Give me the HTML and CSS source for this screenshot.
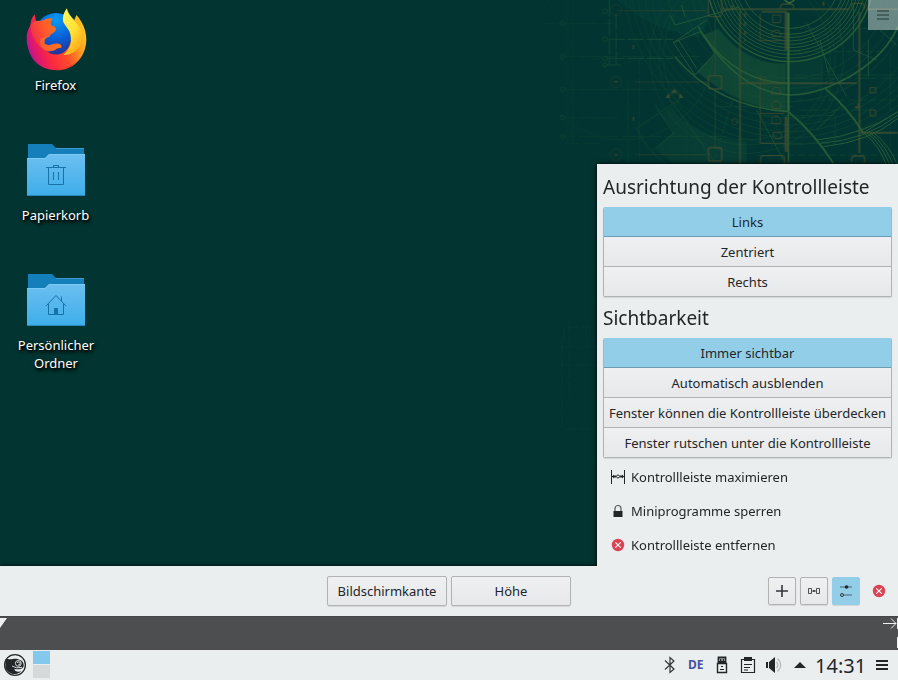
FILE: index.html
```html
<!DOCTYPE html>
<html lang="de">
<head>
<meta charset="utf-8">
<title>Desktop</title>
<link rel="stylesheet" href="styles.css">
</head>
<body>
<main class="desktop">
  <svg class="wallpaper" viewBox="0 0 1074 510" fill="none">
    <defs>
      <linearGradient id="fade" x1="0" x2="1"><stop offset="0" stop-color="#fff" stop-opacity=".25"/><stop offset=".45" stop-color="#fff" stop-opacity=".8"/><stop offset="1" stop-color="#fff" stop-opacity=".92"/></linearGradient>
      <mask id="fadeMask" maskUnits="userSpaceOnUse" x="0" y="0" width="1074" height="510"><rect width="1074" height="510" fill="url(#fade)"/></mask>
    </defs>
    <g mask="url(#fadeMask)">
      <path d="M230 0Q330 90 480 112L510 50 500 0Z" fill="#0b4a40" opacity=".4"/>
      <path d="M535 85Q620 195 738 190V335Q590 320 470 215L525 160 490 105Z" fill="#174f36" opacity=".8"/>
      <path d="M345 445L400 395 360 345 395 320Q450 410 620 425V490H400Z" fill="#10493a" opacity=".5"/>
      <path d="M745 190Q800 190 850 165V265Q800 285 745 285Z" fill="#10493a" opacity=".4"/>
      <g stroke="#33683b" stroke-width="3" opacity=".85">
        <circle cx="750" cy="-65" r="250" stroke-width="5"/><circle cx="750" cy="-65" r="239"/><circle cx="750" cy="-65" r="228"/><circle cx="750" cy="-65" r="218"/><circle cx="750" cy="-65" r="208"/><circle cx="750" cy="-65" r="198"/><circle cx="750" cy="-65" r="188"/><circle cx="750" cy="-65" r="178"/><circle cx="750" cy="-65" r="168"/><circle cx="750" cy="-65" r="150"/>
        <path d="M475 80Q590 275 745 285Q800 286 855 265Q1020 200 1074 80" stroke-width="5"/>
        <path d="M490 105Q590 245 740 250M405 170Q530 320 745 335" stroke-width="5"/>
        <path d="M745 335Q820 395 880 490M855 265Q920 320 970 398" stroke-width="6"/>
        <path d="M970 398L1074 335M970 398Q1020 435 1045 510M980 398Q1030 435 1055 510M990 398Q1040 435 1065 510M1000 398Q1050 435 1074 500"/>
        <path d="M400 128L500 60M400 128L465 225 525 160 480 95ZM415 120L470 205M390 45L405 75 600 20M425 15L435 50M840 430Q980 420 1074 345M850 440Q990 425 1074 355M830 420Q970 405 1074 335"/>
        <path d="M800 70L920 290M650 330L730 480M830 390L905 315M940 10V150L1010 180M985 120V230M1020 90L1070 135M840 120L865 220" stroke-width="2"/>
        <path d="M290 385L400 310 520 480M290 385Q310 440 375 490M345 315L400 400 340 450" opacity=".6"/>
      </g>
      <g stroke="#245c3b" stroke-width="2.500" opacity=".45">
        <circle cx="750" cy="-65" r="300"/><circle cx="750" cy="-65" r="330"/><circle cx="750" cy="-65" r="370"/><circle cx="750" cy="-65" r="420"/><circle cx="750" cy="-65" r="440"/><circle cx="750" cy="-65" r="460"/><circle cx="750" cy="-65" r="478"/><circle cx="750" cy="-65" r="500"/><circle cx="620" cy="170" r="250"/><circle cx="620" cy="170" r="265"/><circle cx="620" cy="170" r="290"/><circle cx="250" cy="150" r="270"/>
        <path d="M80 0V430M98 0V430M0 70H220M60 170H480M60 268H390M60 353H240M60 410H560M75 430H180M265 240V510M298 180V510M620 160L520 490M530 320H760M670 347H885V430H670M710 347V400M870 200V300M760 225H1074M760 235H1074M900 0V130M1050 160V440" stroke-dasharray="44 10 70 6"/>
        <path d="M750 85H1000M760 155H1020M770 300H1074M780 330H990M650 465H1074" stroke-dasharray="22 9"/>
      </g>
      <g stroke="#2a643b" stroke-width="3" opacity=".75">
        <path d="M208 0V195M228 40V195M195 195H245M205 118H400M205 175H400" stroke-dasharray="50 7"/>
        <circle cx="195" cy="34" r="7"/><circle cx="195" cy="118" r="7"/><circle cx="195" cy="175" r="7"/><circle cx="195" cy="195" r="6"/><circle cx="68" cy="70" r="7"/><circle cx="68" cy="170" r="7"/><circle cx="68" cy="268" r="7"/><circle cx="68" cy="353" r="7"/><circle cx="68" cy="410" r="7"/>
      </g>
      <g stroke="#5c5430" stroke-width="4" opacity=".7">
        <path d="M545 28H930M665 35H740M980 28H1074M600 32V510M600 250H950M958 35V460M960 398H1074" stroke="#4e5732" stroke-width="6"/>
        <path d="M230 32H500M525 50V225M525 270V440M285 246H500M285 464H500M970 30L985 10" stroke-width="3" opacity=".7"/>
        <path d="M505 0V40Q505 50 515 50H535Q545 50 545 40V0M722 28V18Q722 12 730 12H752Q760 12 760 20V28M935 25V15Q935 10 943 10H965Q972 10 972 18V28M662 510V475Q662 467 670 467H725Q733 467 733 475V510M935 485V477Q935 468 944 468H966Q974 468 974 477V490"/>
        <rect x="505" y="227" width="40" height="40" rx="7"/><rect x="505" y="443" width="40" height="40" rx="7" stroke-width="5"/>
        <path d="M738 35V150M738 350V455" stroke-width="9"/><path d="M660 40V122H735M660 225V430H735M660 340H735" stroke-width="3"/>
        <path d="M695 110V100A14 14 0 0 1 722 100V110ZM695 282V275A13 13 0 0 1 722 275V282ZM695 325V317A13 13 0 0 1 722 317V325ZM695 370V362A13 13 0 0 1 722 362V370ZM700 397H724V415H700ZM698 45H722V68H698ZM990 263H1007V279H990ZM990 330H1007V348H990Z" stroke-width="3"/>
        <circle cx="228" cy="30" r="17" stroke-width="2"/><circle cx="228" cy="246" r="17" stroke-width="2"/><circle cx="228" cy="464" r="17" stroke-width="2"/><circle cx="403" cy="294" r="15" stroke-width="2"/><circle cx="584" cy="365" r="9" stroke-width="2"/><circle cx="672" cy="238" r="8" stroke-width="2"/>
        <path d="M222 246H234M222 464H234M615 40V125M280 135V150M280 350V365M577 15V30M850 5V25M955 310V335M945 322H970" stroke-width="6" stroke-dasharray="12 14"/>
        <path d="M403 266L414 278H392ZM388 278L376 294H388ZM418 278L430 294H418Z" fill="#74652b" stroke="none"/>
      </g>
      <path d="M745 38V335" stroke="#3c713c" stroke-width="7"/>
      <path d="M745 335V490" stroke="#3c6337" stroke-width="4"/>
      <path d="M733 0L748 10 763 0" stroke="#50783c" stroke-width="4"/>
    </g>
  </svg>
  <svg class="wallpaper-lower" viewBox="0 0 50 130" fill="none" stroke="#063b36">
    <path d="M2 20V108H38M2 26H38M9 0V80M4 18V6H38M26 8V24M0 44H38" stroke-dasharray="12 3"/>
  </svg>

  <nav class="icons">
    <div class="shortcut">
      <svg class="firefox" viewBox="78 24 182 188">
        <defs>
          <radialGradient id="globe" cx=".5" cy=".15" r=".95"><stop offset="0" stop-color="#0a9cf4"/><stop offset=".45" stop-color="#0860d8"/><stop offset="1" stop-color="#2d217c"/></radialGradient>
          <linearGradient id="body" x1="1" y1=".25" x2="0" y2=".6"><stop offset="0" stop-color="#ffcf25"/><stop offset=".22" stop-color="#ff9a20"/><stop offset=".45" stop-color="#ff4b2b"/><stop offset=".7" stop-color="#fb2a40"/><stop offset=".88" stop-color="#e0186c"/><stop offset="1" stop-color="#b3159a"/></linearGradient>
          <linearGradient id="face" x1="1" y1=".2" x2="0" y2=".6"><stop offset="0" stop-color="#ff8018"/><stop offset=".5" stop-color="#ff5a2a"/><stop offset="1" stop-color="#f02a4c"/></linearGradient>
          <linearGradient id="flame" x1=".2" y1="0" x2=".8" y2="1"><stop offset="0" stop-color="#fff65a"/><stop offset=".5" stop-color="#ffe234"/><stop offset="1" stop-color="#ff9c18"/></linearGradient>
        </defs>
        <circle cx="168" cy="104" r="65" fill="url(#globe)"/>
        <path d="M104 43C94 54 92 65 91 76C80 93 78 112 82 134C90 184 126 210 169 210C217 210 256 174 258 120C258 88 245 65 229 45C219 62 221 70 217 80C220 135 197 163 169 163C142 163 128 143 126 117C133 96 114 91 108 64Z" fill="url(#body)"/>
        <path d="M91 76C99 62 112 60 121 63C132 59 143 53 157 55C152 64 150 70 154 77C164 78 170 84 166 92C159 101 147 103 149 111C139 110 131 116 133 131C149 141 157 128 171 130C183 131 186 137 183 143C168 141 166 155 144 153C128 151 119 138 112 130C99 114 94 99 91 76Z" fill="url(#face)"/>
        <path d="M119 121C123 108 137 107 148 111C137 111 133 119 134 130C150 141 157 128 172 131C183 133 185 137 182 143C169 140 165 157 142 152C128 148 119 136 119 121Z" fill="#ff7a22" opacity=".5"/>
        <path d="M200 25C203 44 222 59 234 76C255 104 246 137 222 154C211 162 199 165 190 164C211 148 218 119 207 93C198 75 187 71 188 55C188 43 194 34 200 25Z" fill="url(#flame)"/>
        <path d="M211 94C231 125 211 155 190 164C226 162 246 141 245 112C238 129 228 139 218 142C224 123 219 107 211 94Z" fill="#ffb91b" opacity=".65"/>
        <path d="M246 160Q225 199 190 202Q218 207 246 160Z" fill="#ef3724"/>
      </svg>
      <span class="short">Firefox</span>
    </div>
    <div class="shortcut">
      <svg class="folder" viewBox="0 0 58 54" fill="none">
        <defs><linearGradient id="sheet" x1="0" y1="0" x2="0" y2="1"><stop stop-color="#6cbff0"/><stop offset="1" stop-color="#3daee9"/></linearGradient></defs>
        <path d="M1 1H25L29 5H57V20H1Z" fill="#147fba"/><path d="M29 5.5H57" stroke="#3e99cc"/>
        <path d="M0 15H18L22 11H58V53H0Z" fill="url(#sheet)"/><path d="M0 15.5H18.3L22.3 11.5H58" stroke="#7dcaf4"/><path d="M0 52.5H58" stroke="#2d86bb"/>
        <path d="M19 24.500H39M26.500 24V22.500H31.500V24M21.500 25V41.500H36.500V25M26.500 29V37M31.500 29V37" stroke="#1672a7"/>
      </svg>
      <span class="short">Papierkorb</span>
    </div>
    <div class="shortcut">
      <svg class="folder" viewBox="0 0 58 54" fill="none">
        <path d="M1 1H25L29 5H57V20H1Z" fill="#147fba"/><path d="M29 5.5H57" stroke="#3e99cc"/>
        <path d="M0 15H18L22 11H58V53H0Z" fill="url(#sheet)"/><path d="M0 15.5H18.3L22.3 11.5H58" stroke="#7dcaf4"/><path d="M0 52.5H58" stroke="#2d86bb"/>
        <path d="M19 33L29 22.500L39 33M21.500 31V41.500H36.500V31M34.500 28V23.500" stroke="#1672a7"/><path d="M27 35H31V42H27Z" fill="#1672a7"/>
      </svg>
      <span>Persönlicher<br>Ordner</span>
    </div>
  </nav>

  <button class="toolbox" aria-label="Menü"><i></i><i></i><i></i></button>

  <aside class="settings">
    <h2>Ausrichtung der Kontrollleiste</h2>
    <div class="group">
      <button class="option on">Links</button>
      <button class="option">Zentriert</button>
      <button class="option">Rechts</button>
    </div>
    <h2>Sichtbarkeit</h2>
    <div class="group">
      <button class="option on">Immer sichtbar</button>
      <button class="option">Automatisch ausblenden</button>
      <button class="option">Fenster können die Kontrollleiste überdecken</button>
      <button class="option">Fenster rutschen unter die Kontrollleiste</button>
    </div>
    <div class="actions">
      <button class="action">
        <svg viewBox="0 0 16 16" fill="none" stroke="#232629"><path d="M1.500 1V15M14.500 1V15M2 7.500H6M10 7.500H14"/><path d="M2 7.500L4 5.500V6.500H6V8.500H4V9.500ZM14 7.500L12 5.500V6.500H10V8.500H12V9.500Z" fill="#232629" stroke="none"/><circle cx="8" cy="7.500" r="1.500"/></svg>
        <span>Kontrollleiste maximieren</span>
      </button>
      <button class="action">
        <svg viewBox="0 0 16 16" fill="none"><path d="M5 8V5.500A3 3 0 0 1 11 5.500V8" stroke="#55585a" stroke-width="1.200"/><path d="M3.500 8H12.500V14H3.500Z" fill="#232629"/></svg>
        <span>Miniprogramme sperren</span>
      </button>
      <button class="action">
        <svg viewBox="0 0 16 16"><circle cx="8" cy="8" r="6.200" fill="#da4453"/><path d="M5.300 5.300L10.700 10.700M10.700 5.300L5.300 10.700" stroke="#fff" stroke-width="1.100"/></svg>
        <span>Kontrollleiste entfernen</span>
      </button>
    </div>
  </aside>
</main>

<section class="controller">
  <div class="sizing">
    <button class="btn">Bildschirmkante</button>
    <button class="btn">Höhe</button>
  </div>
  <div class="tools">
    <button class="tool"><svg viewBox="0 0 16 16" stroke="#31363b" stroke-width="1.600"><path d="M8 2V14M2 8H14"/></svg></button>
    <button class="tool"><svg viewBox="0 0 16 16" fill="none" stroke="#4d5052"><path d="M2.500 5.500H5.500V10.500H2.500ZM10.500 5.500H13.500V10.500H10.500ZM6 8H10"/><path d="M7 7H9V9H7Z" fill="#4d5052" stroke="none"/></svg></button>
    <button class="tool on"><svg viewBox="0 0 16 16" fill="none" stroke="#4b6571"><path d="M2 4H14M6 12H14"/><circle cx="8.500" cy="4" r="1.800" fill="#232629" stroke="none"/><circle cx="4" cy="12" r="1.500" stroke="#31363b"/></svg></button>
    <button class="close"><svg viewBox="0 0 16 16"><circle cx="8" cy="8" r="6.200" fill="#da4453"/><path d="M5.300 5.300L10.700 10.700M10.700 5.300L5.300 10.700" stroke="#fff" stroke-width="1.100"/></svg></button>
  </div>
</section>

<section class="ruler">
  <svg class="start" viewBox="0 0 8 34"><path d="M0 2H7L0 12Z" fill="#eff0f1"/></svg>
  <svg class="end" viewBox="0 0 16 34" fill="none" stroke="#eff0f1"><path d="M1 7.500H14M9 2.500L14 7.500L9 12.500M15.500 2V13M15.500 21V32"/></svg>
</section>

<footer class="taskbar">
  <svg class="launcher" viewBox="0 0 24 24" fill="none"><circle cx="12" cy="12" r="10.400" stroke="#232629" stroke-width="1.300"/><path d="M2.500 6.500C5 5 7 7 9.500 6C12 5.300 15 5.500 18 7.300C20.500 9 21.300 12 20.300 14.300C18 16.800 15 16.500 11.500 16C11 18 15 19.500 18.500 18.200C13 23 5.500 21.500 2.500 15Z" fill="#232629"/><circle cx="15.300" cy="10.400" r="2.900" stroke="#eceff0" stroke-width=".9"/><path d="M14.200 10A1.500 1.500 0 1 1 15 11.800" stroke="#dfe2e3" stroke-width=".9"/><path d="M9 13Q13 16 19 14.300" stroke="#eceff0" stroke-width=".9"/></svg>
  <div class="pager"><i class="current"></i><i></i></div>
  <div class="tray">
    <svg class="bt" viewBox="0 0 12 18" fill="none" stroke="#34383b" stroke-width="1.200"><path d="M1 4.500L10 13L6 16.500V1.500L10 5L1 13.500"/></svg>
    <span class="layout">DE</span>
    <svg class="usb" viewBox="0 0 12 18" fill="none" stroke="#232629"><path d="M2.500 7V1.500H9.500V7" stroke-width="1.800"/><path d="M4 3H5.500V5H4ZM6.500 3H8V5H6.500ZM2 5H10V8H2Z" fill="#232629" stroke="none"/><path d="M1.500 7.500H10.500V16.500H1.500Z" stroke-width="1.400"/><path d="M4 13.500H8M5 10.500H7"/></svg>
    <svg class="clip" viewBox="0 0 16 18" fill="none" stroke="#232629"><path d="M1.500 3.500H14.500V16.500H1.500Z" stroke-width="1.200"/><path d="M4 1H12V5H4Z" fill="#232629" stroke="none"/><path d="M4 8.500H12M4 11.500H10M4 14H8"/></svg>
    <svg class="vol" viewBox="0 0 18 18" fill="none"><path d="M1 6H3V12H1ZM4 6L10 1V17L4 12Z" fill="#232629"/><path d="M11.500 6Q14 9 11.500 12M12.500 2.500Q19 9 12.500 15.500" stroke="#b4b8b9" stroke-width="1.200"/></svg>
    <svg class="arrow" viewBox="0 0 12 6"><path d="M0 6L6 0L12 6Z" fill="#232629"/></svg>
    <time>14:31</time>
    <div class="menu"><i></i><i></i><i></i></div>
  </div>
</footer>
</body>
</html>
```
FILE: styles.css
```css
* { box-sizing: border-box; }
body {
  margin: 0;
  width: 898px;
  height: 680px;
  overflow: hidden;
  display: grid;
  grid-template-rows: 566px 50px 34px 30px;
  font: 13px/18px "Noto Sans", sans-serif;
  color: #232629;
}
button {
  margin: 0;
  padding: 0;
  border: 0;
  background: none;
  font: inherit;
  color: inherit;
  white-space: nowrap;
}
svg { display: block; flex: none; }

.desktop { position: relative; background: #023531; overflow: hidden; }
.wallpaper { position: absolute; right: 0; top: 0; width: 358px; height: 170px; }
.wallpaper-lower { position: absolute; left: 560px; top: 321px; width: 50px; height: 130px; }
.icons {
  position: relative;
  display: grid;
  grid-template-rows: repeat(3, 130px);
  width: 112px;
}
.shortcut {
  display: flex;
  flex-direction: column;
  align-items: center;
  color: #fff;
  text-align: center;
  text-shadow: 1px 2px 3px #000, 1px 2px 4px #000;
}
.shortcut span { white-space: nowrap; }
.shortcut .short { margin-right: 1px; }
.firefox { width: 61px; height: 63px; margin: 8px 0 5px; }
.folder { width: 58px; height: 54px; margin: 13px 0 9px; }

.toolbox {
  position: absolute;
  right: 0;
  top: 0;
  width: 30px;
  height: 30px;
  padding: 10px 9px;
  display: flex;
  flex-direction: column;
  gap: 2px;
  background: rgba(208, 218, 218, .5);
}
.toolbox i { height: 2px; width: 12px; background: #455f5d; }

.settings {
  position: absolute;
  z-index: 1;
  right: 0;
  bottom: 0;
  width: 301px;
  height: 402px;
  padding: 9px 6px 0;
  background: #ebeeef;
  box-shadow: 0 0 5px #000;
}
.settings h2 {
  margin: 0;
  height: 28px;
  font-size: 19px;
  line-height: 28px;
  font-weight: 400;
  white-space: nowrap;
}
.group {
  display: flex;
  flex-direction: column;
  margin: 6px 0 7px;
  border: 1px solid #b0b3b4;
  border-radius: 2px;
  overflow: hidden;
  box-shadow: 0 1px 1px #d3d6d7;
}
.option {
  height: 30px;
  border-bottom: 1px solid #b0b3b4;
  background: linear-gradient(#eff0f1, #e7e8ea);
}
.option:last-child { height: 29px; border-bottom: 0; }
.option.on {
  height: 30px;
  margin: -1px -1px 0;
  background: #93cee9;
  border-color: #6b9cb2;
}
.group:has(.on) { border-top-color: #93cee9; }
.actions { display: flex; flex-direction: column; margin-top: -5px; }
.action {
  height: 34px;
  padding-left: 7px;
  display: flex;
  align-items: center;
  gap: 5px;
}
.action svg { width: 16px; height: 16px; }

.controller {
  position: relative;
  display: grid;
  grid-template-columns: 1fr auto 1fr;
  align-items: center;
  background: #ebeeef;
  box-shadow: 0 0 4px #000;
  clip-path: inset(-5px 0 0 0);
}
.sizing { grid-column: 2; display: flex; gap: 4px; }
.btn, .tool {
  border: 1px solid #b0b3b4;
  border-radius: 2px;
  background: linear-gradient(#eff0f1, #e7e8ea);
  box-shadow: 0 1px 1px #d3d6d7;
}
.btn { width: 120px; height: 30px; }
.tools { display: flex; justify-content: flex-end; gap: 4px; }
.tool, .close { width: 28px; height: 28px; display: grid; place-items: center; }
.tools svg { width: 16px; height: 16px; }
.tool.on { background: #93cee9; border-color: #93cee9; }
.close { width: 34px; padding-right: 4px; }

.ruler { display: flex; justify-content: space-between; background: #4d4e50; border-top: 1px solid #454648; position: relative; }
.ruler svg { height: 34px; margin-top: -1px; }
.start { width: 8px; }
.end { width: 16px; }

.taskbar { display: flex; align-items: center; background: #ebeeef; padding-left: 3px; }
.launcher { width: 24px; height: 24px; }
.pager { display: grid; gap: 1px; margin: 1px 0 2px 6px; width: 17px; align-self: stretch; }
.pager i { background: #d5d9da; }
.pager .current { background: #84c8ec; }
.tray { display: flex; align-items: center; margin-left: auto; padding-right: 10px; }
.bt { width: 12px; height: 18px; }
.layout { margin-left: 12px; width: 17px; font-weight: 700; font-size: 12px; color: #4553a0; }
.usb { width: 12px; height: 18px; margin-left: 11px; }
.clip { width: 16px; height: 18px; margin-left: 12px; }
.vol { width: 18px; height: 18px; margin-left: 9px; }
.arrow { width: 12px; height: 6px; margin-left: 11px; }
time { width: 51px; height: 30px; padding-top: 1px; margin: 0 10px 0 9px; font-size: 20px; line-height: 30px; white-space: nowrap; }
.menu { display: grid; gap: 2px; width: 12px; }
.menu i { height: 2px; background: #232629; }
```
